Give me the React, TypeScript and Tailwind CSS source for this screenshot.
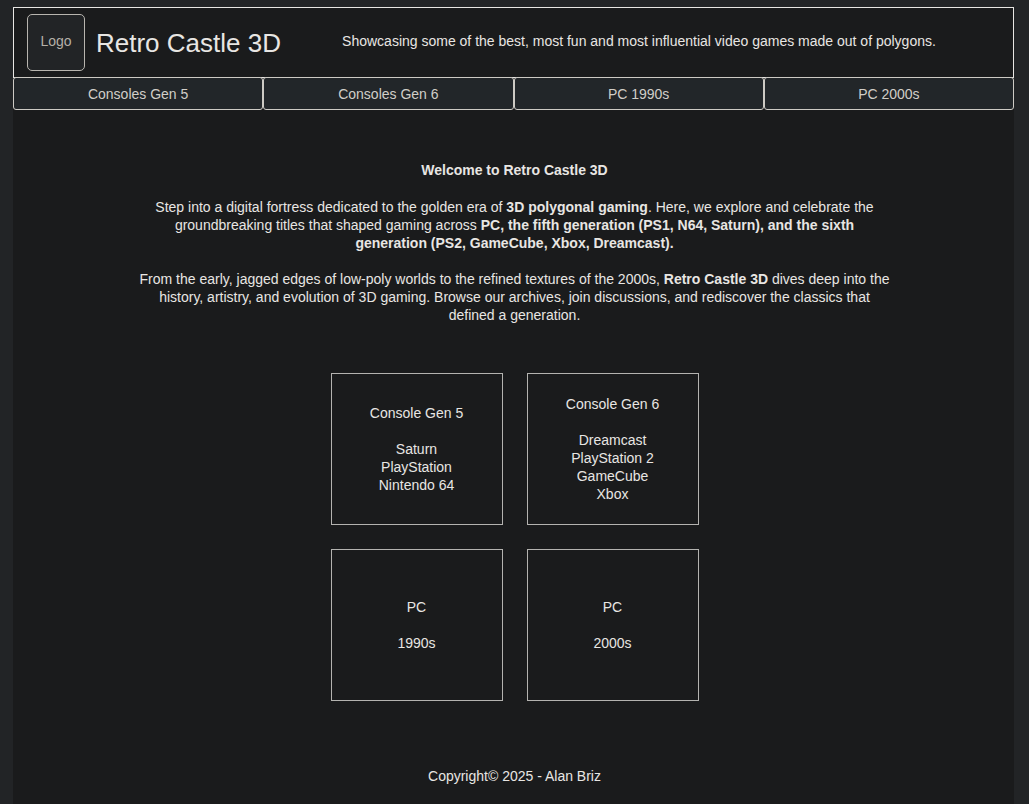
const sections = [
  { label: 'Consoles Gen 5', id: 'gen5' },
  { label: 'Consoles Gen 6', id: 'gen6' },
  { label: 'PC 1990s', id: 'pc1990s' },
  { label: 'PC 2000s', id: 'pc2000s' },
];

const cards = [
  { id: 'gen5', title: 'Console Gen 5', items: ['Saturn', 'PlayStation', 'Nintendo 64'] },
  { id: 'gen6', title: 'Console Gen 6', items: ['Dreamcast', 'PlayStation 2', 'GameCube', 'Xbox'] },
  { id: 'pc1990s', title: 'PC', items: ['1990s'] },
  { id: 'pc2000s', title: 'PC', items: ['2000s'] },
];

function Header() {
  return (
    <header className="flex items-center border border-[#e8e6e3] py-1.5 pr-4 pl-[13px]">
      <button
        type="button"
        className="h-[57px] w-[58px] shrink-0 rounded-[5px] border border-[#b8b5af] bg-[#222426] pb-1 text-[#b5b0a8]"
      >
        Logo
      </button>
      <h1 className="ml-[11px] shrink-0 text-[26px] leading-8">Retro Castle 3D</h1>
      <p className="flex-1 pb-1 text-center">
        Showcasing some of the best, most fun and most influential video games made out of polygons.
      </p>
    </header>
  );
}

function Navigation() {
  return (
    <nav className="-mt-px grid grid-cols-4">
      {sections.map((section) => (
        <button
          key={section.id}
          type="button"
          className="h-[33px] rounded-[3px] border border-[#cdcac4] bg-[#222629] text-[#d1cec8]"
        >
          {section.label}
        </button>
      ))}
    </nav>
  );
}

function Intro() {
  return (
    <section className="mx-auto w-[754px] max-w-full pt-[51px] text-center">
      <h2 className="mb-[19px] font-bold">Welcome to Retro Castle 3D</h2>
      <p className="mb-[18px]">
        Step into a digital fortress dedicated to the golden era of <strong>3D polygonal gaming</strong>. Here, we
        explore and celebrate the groundbreaking titles that shaped gaming across{' '}
        <strong>
          PC, the fifth generation (PS1, N64, Saturn), and the sixth generation (PS2, GameCube, Xbox, Dreamcast).
        </strong>
      </p>
      <p>
        From the early, jagged edges of low-poly worlds to the refined textures of the 2000s,{' '}
        <strong>Retro Castle 3D</strong> dives deep into the history, artistry, and evolution of 3D gaming. Browse our
        archives, join discussions, and rediscover the classics that defined a generation.
      </p>
    </section>
  );
}

function Cards() {
  return (
    <section className="mt-[49px] grid grid-cols-[172px_172px] justify-center gap-6">
      {cards.map((card) => (
        <article
          key={card.id}
          className="flex h-[152px] flex-col items-center justify-center gap-[18px] border border-[#b4b3b0] text-center"
        >
          <h3>{card.title}</h3>
          <ul>
            {card.items.map((item) => (
              <li key={item}>{item}</li>
            ))}
          </ul>
        </article>
      ))}
    </section>
  );
}

export default function App() {
  return (
    <div className="flex min-h-screen flex-col bg-[#222426] pt-[7px] pr-[15px] pl-[13px] font-['Liberation_Sans',Arial,sans-serif] text-[14px] leading-[18px] text-[#e8e6e3]">
      <div className="flex grow flex-col bg-[#1a1b1c]">
        <Header />
        <Navigation />
        <main className="pl-0.5">
          <Intro />
          <Cards />
        </main>
        <footer className="pt-[66px] pb-[19px] pl-0.5 text-center">Copyright© 2025 - Alan Briz</footer>
      </div>
    </div>
  );
}
